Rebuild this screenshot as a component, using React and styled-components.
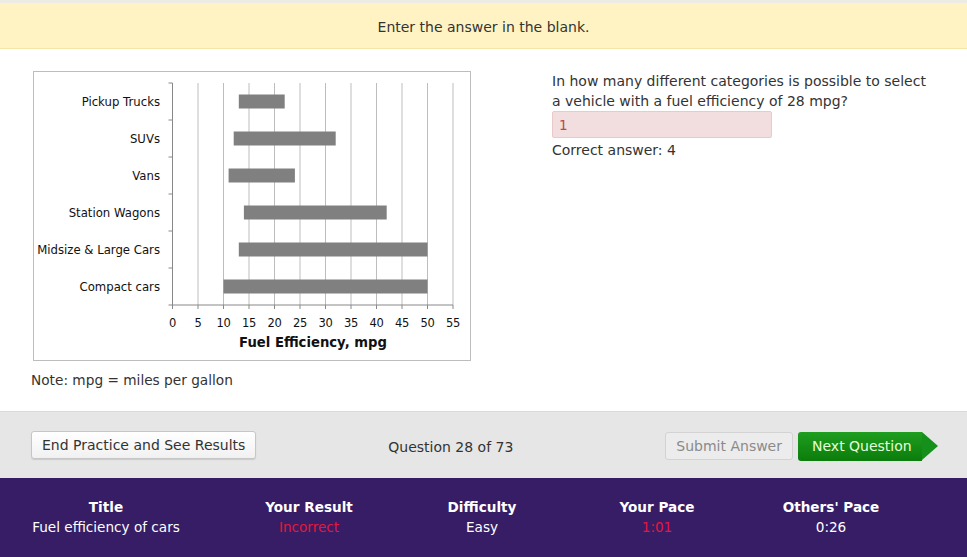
import styled, { createGlobalStyle } from "styled-components";

const GlobalStyle = createGlobalStyle`
  html, body {
    margin: 0;
    padding: 0;
    background: #ffffff;
  }
  body {
    font-family: "DejaVu Sans", Verdana, sans-serif;
    color: #333333;
  }
`;

const Page = styled.div`
  width: 967px;
  height: 557px;
  display: flex;
  flex-direction: column;
  overflow: hidden;
  border-top: 3px solid #ecebe4;
  box-sizing: border-box;
`;

const Banner = styled.div`
  height: 46px;
  background: #fff3c3;
  border-bottom: 1px solid #f3e6a6;
  display: flex;
  align-items: center;
  justify-content: center;
  font-size: 14px;
  color: #333;
  padding-top: 2px;
  box-sizing: border-box;
`;

const Main = styled.div`
  flex: 1;
  display: flex;
  padding: 22px 0 0 31px;
`;

const LeftCol = styled.div`
  width: 519px;
  display: flex;
  flex-direction: column;
`;

const ChartBox = styled.div`
  margin-left: 2px;
  width: 438px;
  height: 290px;
  border: 1px solid #bdbdbd;
  box-sizing: border-box;
`;

const Note = styled.div`
  margin-top: 11px;
  font-size: 13.7px;
  color: #333;
`;

const RightCol = styled.div`
  display: flex;
  flex-direction: column;
  padding-left: 2px;
`;

const Question = styled.p`
  margin: 0;
  font-size: 14px;
  line-height: 20px;
  color: #333;
`;

const AnswerInput = styled.div`
  width: 220px;
  height: 27px;
  box-sizing: border-box;
  background: #f2dede;
  border: 1px solid #ecc9c9;
  border-radius: 2px;
  color: #b94a48;
  font-size: 13.5px;
  padding: 5px 6px;
`;

const Correct = styled.div`
  margin-top: 2px;
  font-size: 14px;
  line-height: 20px;
  color: #333;
`;

const ActionBar = styled.div`
  height: 67px;
  background: #e6e6e6;
  border-top: 1px solid #dadada;
  box-sizing: border-box;
  display: flex;
  align-items: center;
  padding: 0 45px 0 31px;
`;

const Button = styled.button`
  font-family: "DejaVu Sans", Verdana, sans-serif;
  font-size: 14px;
  height: 28px;
  padding: 0 10px;
  border-radius: 3px;
  border: 1px solid ${(p) => (p.disabled ? "#d3d3d3" : "#c6c6c6")};
  background: ${(p) =>
    p.disabled ? "#ececec" : "linear-gradient(#ffffff, #f1f1f1)"};
  color: ${(p) => (p.disabled ? "#8a8a8a" : "#333")};
  box-shadow: ${(p) => (p.disabled ? "none" : "0 1px 1px rgba(0,0,0,0.12)")};
  margin-top: ${(p) => (p.disabled ? "2px" : "0")};
  cursor: pointer;
`;

const Counter = styled.div`
  flex: 1;
  text-align: center;
  font-size: 14px;
  color: #333;
  padding-right: 20px;
  margin-top: 4px;
`;

const NextButton = styled.button`
  position: relative;
  margin-left: 5px;
  margin-top: 2px;
  height: 29px;
  width: 124px;
  border: none;
  border-radius: 3px 0 0 3px;
  background: linear-gradient(#1e9e1e, #0c7c0c);
  color: #e4ffd8;
  font-family: "DejaVu Sans", Verdana, sans-serif;
  font-size: 14px;
  text-align: left;
  padding-left: 14px;
  white-space: nowrap;
  cursor: pointer;

  &::after {
    content: "";
    position: absolute;
    right: -16px;
    top: 0;
    border-top: 14.5px solid transparent;
    border-bottom: 14.5px solid transparent;
    border-left: 16px solid #15901a;
  }
`;

const Footer = styled.div`
  height: 79px;
  background: #361d66;
  display: grid;
  grid-template-columns: 212px 194px 152px 198px 150px;
  align-content: center;
  padding-bottom: 2px;
  box-sizing: border-box;
`;

const Stat = styled.div`
  display: flex;
  flex-direction: column;
  align-items: center;
  font-size: 13.6px;
  line-height: 20px;
`;

const StatLabel = styled.span`
  font-weight: bold;
  color: #ffffff;
`;

const StatValue = styled.span`
  color: ${(p) => (p.bad ? "#e5173a" : "#ffffff")};
`;

const rows = [
  { name: "Pickup Trucks", from: 13, to: 22 },
  { name: "SUVs", from: 12, to: 32 },
  { name: "Vans", from: 11, to: 24 },
  { name: "Station Wagons", from: 14, to: 42 },
  { name: "Midsize & Large Cars", from: 13, to: 50 },
  { name: "Compact cars", from: 10, to: 50 },
];

const chartFont = "'DejaVu Sans', Verdana, sans-serif";

function Chart() {
  const x0 = 138.5;
  const unit = 5.1;
  const top = 11;
  const rowH = 37;
  const bottom = top + rowH * 6;
  const ticks = [0, 5, 10, 15, 20, 25, 30, 35, 40, 45, 50, 55];
  const sx = (v) => x0 + v * unit;

  return (
    <svg width="436" height="288" viewBox="0 0 436 288">
      {ticks.slice(1).map((t) => (
        <line key={t} x1={sx(t)} y1={top} x2={sx(t)} y2={bottom} stroke="#bdbdbd" strokeWidth="1" />
      ))}
      {ticks.map((t) => (
        <line key={"t" + t} x1={sx(t)} y1={bottom} x2={sx(t)} y2={bottom + 4} stroke="#888" strokeWidth="1" />
      ))}
      {Array.from({ length: 7 }).map((_, i) => (
        <line key={"y" + i} x1={x0 - 4} y1={top + i * rowH} x2={x0} y2={top + i * rowH} stroke="#888" strokeWidth="1" />
      ))}
      <line x1={x0} y1={top} x2={x0} y2={bottom} stroke="#888" strokeWidth="1" />
      <line x1={x0} y1={bottom} x2={sx(55)} y2={bottom} stroke="#888" strokeWidth="1" />
      {rows.map((r, i) => {
        const cy = top + i * rowH + rowH / 2;
        return (
          <g key={r.name}>
            <rect x={sx(r.from)} y={cy - 7} width={(r.to - r.from) * unit} height="14" fill="#808080" />
            <text x="126" y={cy + 4} textAnchor="end" fontSize="11.7" fill="#111" fontFamily={chartFont}>
              {r.name}
            </text>
          </g>
        );
      })}
      {ticks.map((t) => (
        <text key={"l" + t} x={sx(t)} y={bottom + 22} textAnchor="middle" fontSize="11.5" fill="#111" fontFamily={chartFont} letterSpacing="-0.3">
          {t}
        </text>
      ))}
      <text x="279" y={bottom + 42} textAnchor="middle" fontSize="13.2" fontWeight="bold" fill="#111" fontFamily={chartFont}>
        Fuel Efficiency,  mpg
      </text>
    </svg>
  );
}

export default function App() {
  return (
    <Page>
      <GlobalStyle />
      <Banner>Enter the answer in the blank.</Banner>
      <Main>
        <LeftCol>
          <ChartBox>
            <Chart />
          </ChartBox>
          <Note>Note: mpg = miles per gallon</Note>
        </LeftCol>
        <RightCol>
          <Question>
            In how many different categories is possible to select
            <br />a vehicle with a fuel efficiency of 28 mpg?
          </Question>
          <AnswerInput>1</AnswerInput>
          <Correct>Correct answer: 4</Correct>
        </RightCol>
      </Main>
      <ActionBar>
        <Button>End Practice and See Results</Button>
        <Counter>Question 28 of 73</Counter>
        <Button disabled>Submit Answer</Button>
        <NextButton>Next Question</NextButton>
      </ActionBar>
      <Footer>
        <Stat>
          <StatLabel>Title</StatLabel>
          <StatValue>Fuel efficiency of cars</StatValue>
        </Stat>
        <Stat>
          <StatLabel>Your Result</StatLabel>
          <StatValue bad>Incorrect</StatValue>
        </Stat>
        <Stat>
          <StatLabel>Difficulty</StatLabel>
          <StatValue>Easy</StatValue>
        </Stat>
        <Stat>
          <StatLabel>Your Pace</StatLabel>
          <StatValue bad>1:01</StatValue>
        </Stat>
        <Stat>
          <StatLabel>Others' Pace</StatLabel>
          <StatValue>0:26</StatValue>
        </Stat>
      </Footer>
    </Page>
  );
}
